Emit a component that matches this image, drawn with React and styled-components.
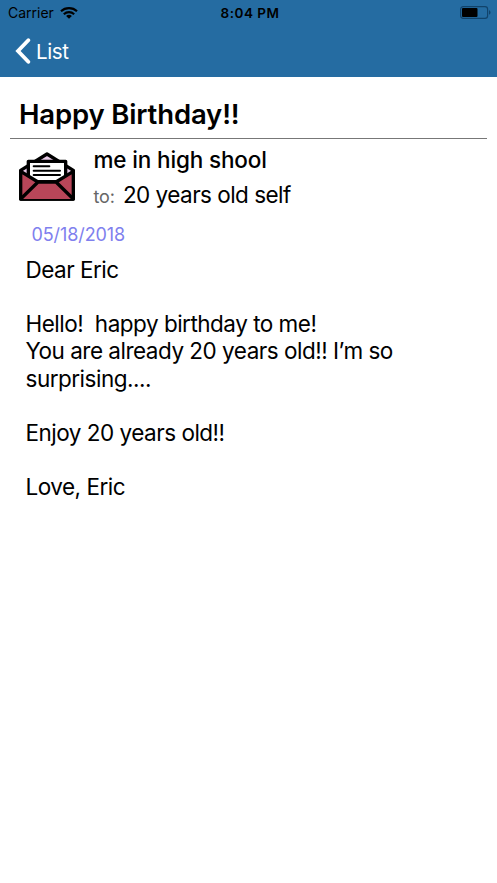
import React from 'react';
import styled, { createGlobalStyle } from 'styled-components';

const GlobalStyle = createGlobalStyle`
  * {
    box-sizing: border-box;
  }

  body {
    margin: 0;
    background: #fff;
    color: #000;
    font-family: Inter, "Liberation Sans", sans-serif;
  }
`;

const Screen = styled.div`
  width: 100%;
  height: 883px;
  background: #fff;
  overflow: hidden;
`;

const Header = styled.header`
  height: 77px;
  background: #256ca2;
`;

const StatusBar = styled.div`
  display: grid;
  grid-template-columns: 1fr auto 1fr;
  align-items: center;
  height: 26px;
  padding: 0 6px 0 8px;
  font-size: 14px;
  line-height: 26px;
`;

const Carrier = styled.div`
  display: flex;
  align-items: center;
  gap: 6px;
`;

const Clock = styled.span`
  padding-left: 1px;
  font-size: 13.5px;
  font-weight: 600;
  letter-spacing: 0.5px;
`;

const Battery = styled.svg`
  justify-self: end;
  margin-bottom: 2px;
`;

const BackButton = styled.button`
  display: flex;
  align-items: center;
  gap: 5px;
  height: 50px;
  padding: 0 0 0 15px;
  border: 0;
  background: none;
  color: #fff;
  font-family: inherit;
  font-size: 20.5px;
  letter-spacing: -0.4px;
`;

const Subject = styled.h1`
  margin: 0 10px;
  padding: 17px 0 0 9px;
  height: 62px;
  border-bottom: 1px solid #777;
  font-size: 27.5px;
  font-weight: 600;
  line-height: 40px;
  letter-spacing: -0.15px;
`;

const Sender = styled.section`
  display: flex;
  gap: 18.5px;
  padding: 5px 0 0 19px;
`;

const Envelope = styled.svg`
  margin-top: 8px;
`;

const From = styled.div`
  font-size: 22.5px;
  font-weight: 500;
  line-height: 32px;
  letter-spacing: -0.15px;
`;

const To = styled.div`
  display: flex;
  align-items: baseline;
  gap: 8px;
  margin-top: 3px;
  font-size: 22.5px;
  line-height: 32px;
  letter-spacing: -0.53px;
`;

const ToLabel = styled.span`
  color: #666;
  font-size: 18px;
  letter-spacing: -0.1px;
`;

const DateLine = styled.time`
  display: block;
  padding: 11px 0 0 31.5px;
  color: #8080ee;
  font-size: 18px;
  line-height: 22px;
  letter-spacing: -0.1px;
`;

const Message = styled.p`
  margin: 10px 26px 0 25.5px;
  font-size: 22.5px;
  line-height: 27.15px;
  letter-spacing: -0.5px;
  white-space: pre-wrap;
`;

const letter = {
  subject: 'Happy Birthday!!',
  from: 'me in high shool',
  to: '20 years old self',
  date: '05/18/2018',
  body: `Dear Eric

Hello!  happy birthday to me!
You are already 20 years old!! I’m so
surprising....

Enjoy 20 years old!!

Love, Eric`,
};

function WifiIcon() {
  return (
    <svg width="18" height="12" viewBox="0 0 18 12" fill="none" stroke="#000" strokeWidth="2.1">
      <path d="M1 4.3C5.4.1 12.6.1 17 4.3" />
      <path d="M3.8 7.2c3-2.8 7.4-2.8 10.4 0" />
      <path d="M9 11.8 6.1 8.9c1.7-1.4 4.1-1.4 5.8 0z" fill="#000" stroke="none" />
    </svg>
  );
}

function BatteryIcon() {
  return (
    <Battery width="31" height="13" viewBox="0 0 31 13">
      <rect x="0.6" y="0.6" width="27" height="11.8" rx="2.6" fill="none" stroke="#11436b" strokeWidth="1.2" />
      <rect x="2" y="2" width="15.5" height="9" rx="1" />
      <path d="M29 4.3c2 .7 2 3.7 0 4.4z" fill="#11436b" />
    </Battery>
  );
}

function EnvelopeIcon() {
  return (
    <Envelope width="56" height="49" viewBox="0 0 168 147" stroke="#000" strokeWidth="10" strokeLinejoin="round">
      <path d="M5 55 84 6l79 49v86H5z" fill="#e9cbe8" />
      <path d="M28 28h112v62H28z" fill="#fff" />
      <path d="M5 58 57 90h54l52-32v83H5z" fill="#b84659" />
      <path d="M5 141 57 90h54l52 51" fill="#b84659" />
      <path d="M44 43h47M44 56h79M44 69h79" strokeWidth="6" strokeLinecap="round" />
    </Envelope>
  );
}

function App() {
  return (
    <Screen>
      <GlobalStyle />
      <Header>
        <StatusBar>
          <Carrier>
            <span>Carrier</span>
            <WifiIcon />
          </Carrier>
          <Clock>8:04 PM</Clock>
          <BatteryIcon />
        </StatusBar>
        <BackButton>
          <svg width="16" height="26" viewBox="0 0 16 26" fill="none" stroke="#fff" strokeWidth="3.8" strokeLinecap="round">
            <path d="M13.3 2.2 3 13l10.3 10.8" />
          </svg>
          List
        </BackButton>
      </Header>
      <Subject>{letter.subject}</Subject>
      <Sender>
        <EnvelopeIcon />
        <div>
          <From>{letter.from}</From>
          <To>
            <ToLabel>to:</ToLabel>
            {letter.to}
          </To>
        </div>
      </Sender>
      <DateLine>{letter.date}</DateLine>
      <Message>{letter.body}</Message>
    </Screen>
  );
}

export default App;
